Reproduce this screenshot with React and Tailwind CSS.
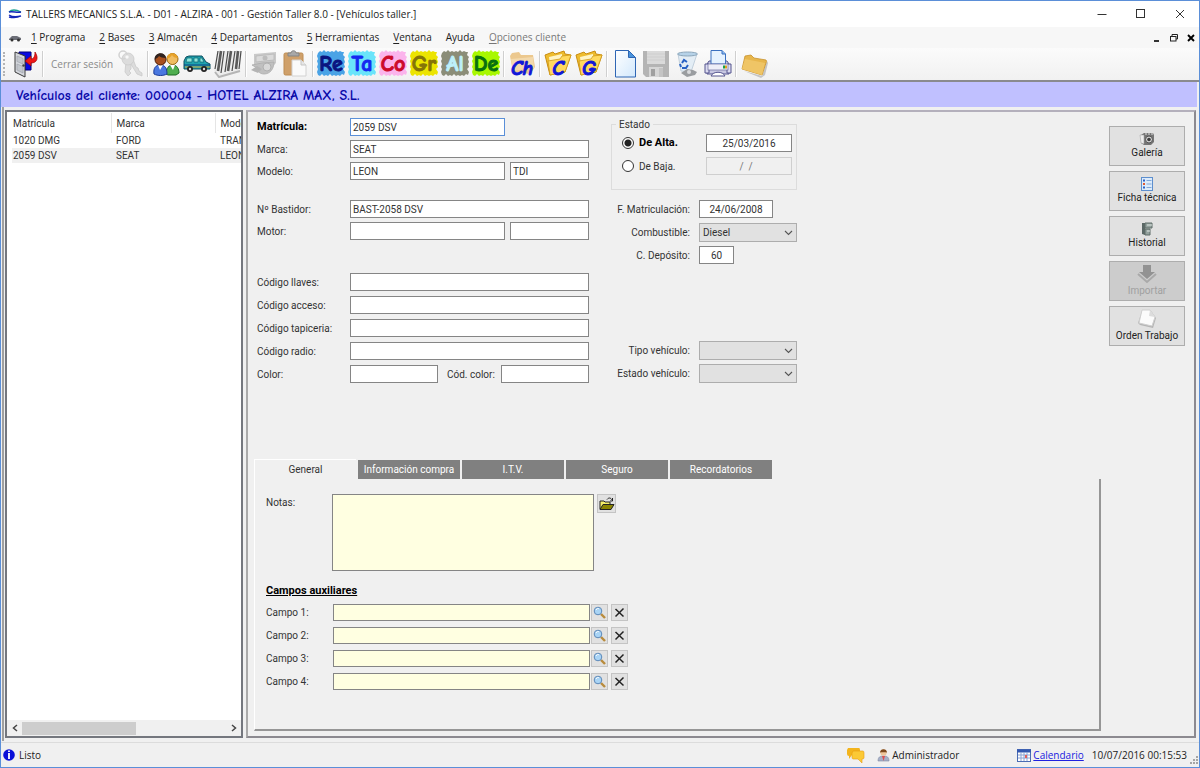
import React from "react";

const ui = "font-['Open_Sans','Noto_Sans',sans-serif]";
const comic = "font-['Comic_Sans_MS','Comic_Neue','DejaVu_Sans',sans-serif]";
const boldText = "text-[11px] font-bold text-black";
const fieldBase = "h-[18px] min-w-0 border bg-white px-[2px] text-[10px] leading-4 text-[#333] outline-none";
const fieldCls = `${fieldBase} border-[#858585]`;

/* ---------- toolbar drawings ---------- */
function Svg({ children, w = 28, h = 28, box }) {
  return (
    <svg width={w} height={h} viewBox={box || `0 0 ${w} ${h}`} aria-hidden="true" className="block shrink-0">
      {children}
    </svg>
  );
}

const DoorIcon = () => (
  <Svg>
    <path d="M8 2 H20 V20 H14 V6 L8 4Z" fill="#0a0ae0" stroke="#00007a" />
    <path d="M4 2 L14 6 V27 L4 22Z" fill="#d4d7dc" stroke="#3a3a3a" />
    <path d="M6 6 L12 8.500 V14 L6 11.500Z M6 14 L12 16.500 V23 L6 20Z" fill="#c2c6cc" stroke="#a0a5ad" strokeWidth=".7" />
    <circle cx="12.500" cy="15.500" r="1.200" fill="#444" />
    <path d="M24 2 C28 8 26 13 20 13 V16 L14 11 L20 6 V9 C23 9 24 6 24 2Z" fill="#f01818" stroke="#a00000" strokeWidth=".7" />
  </Svg>
);
const KeysIcon = () => (
  <Svg>
    <g fill="#dcdcdc" stroke="#cacaca" strokeWidth=".8">
      <path d="M10 11 L9 22 L12 26 L15 23 L13 21 L15 19 L15 11Z" />
      <path d="M13 11 L21 24 L26 26 L26 23 L23 21 L22 18 L20 17 L17 9Z" />
      <circle cx="12" cy="9" r="6" />
    </g>
    <circle cx="7" cy="5" r="4" fill="none" stroke="#d2d2d2" strokeWidth="1.500" />
    <circle cx="11" cy="7" r="1.700" fill="#f8f8f8" />
  </Svg>
);
const PeopleIcon = () => (
  <Svg>
    <path d="M14 24 C14 18 17 15 21 15 C25 15 27 19 27 23 L24 25 H16Z" fill="#4fae4f" stroke="#1d6b24" />
    <path d="M18 15 L21 20 L23 15Z" fill="#fff" />
    <circle cx="20.500" cy="9" r="5.500" fill="#f0bd62" stroke="#9c6a14" />
    <path d="M15 9 C14 2 25 1 26 8 C23 8 21 7 20 5 C19 7 17 8 15 9Z" fill="#e7a229" />
    <path d="M2 24 C1 18 4 15 8 15 C13 15 15 18 15 24 C11 26 6 26 2 24Z" fill="#4a78e0" stroke="#1c3c98" />
    <path d="M6 15 L8 20 L11 15Z" fill="#fff" />
    <circle cx="8.500" cy="9.500" r="5.500" fill="#a8501e" stroke="#4a1c06" />
    <path d="M3 10 C1 3 13 0 14 8 C11 8 8 7 7 6 C6 8 4 8 3 10Z" fill="#30231f" />
  </Svg>
);
const CarIcon = () => (
  <Svg>
    <path d="M1 11 L3 7 L6 6 H19 L23 12 L27 14 V19 H1Z" fill="#1fa3ae" stroke="#0b4f60" />
    <path d="M4 8 H9 V12 H3Z M11 8 H15 V12 H11Z M17 8 H19 L21 12 H17Z" fill="#8fe8dc" stroke="#0b5e6e" strokeWidth=".7" />
    <path d="M1 15 H27" stroke="#0c3f80" />
    <path d="M2 17 H27" stroke="#d8a93a" />
    <circle cx="7" cy="19" r="3" fill="#222" /><circle cx="7" cy="19" r="1.200" fill="#ddd" />
    <circle cx="21" cy="19" r="3" fill="#222" /><circle cx="21" cy="19" r="1.200" fill="#ddd" />
  </Svg>
);
const BarcodeIcon = () => (
  <Svg>
    <path d="M3 1 H28 L26 21 L5 27 L0 21Z" fill="#ececec" />
    <path d="M4 1 L1 19 M10 1 L7 23 M14 1 L11 22 M21 1 L18 21 M27 1 L25 19" stroke="#4c4c4c" strokeWidth="1.200" />
    <path d="M7 1 L4 21 M17 1 L14 21 M24 1 L22 19" stroke="#5a5a5a" strokeWidth="2.600" />
    <path d="M1 22 L5 27 L26 21" fill="none" stroke="#b5b5b5" strokeWidth="2" />
  </Svg>
);
const TruckIcon = () => (
  <Svg>
    <path d="M4 4 L26 2 V13 L24 15 H4Z" fill="#c9c9c9" />
    <path d="M6 6 L24 4 V10 L6 12Z" fill="#dadada" stroke="#b8b8b8" strokeWidth=".8" />
    <circle cx="15" cy="8" r="2.500" fill="#bcbcbc" />
    <path d="M2 15 L12 13 L24 12 C24 19 20 24 14 24 C9 24 7 20 7 18Z" fill="#c0c0c0" stroke="#acacac" strokeWidth=".8" />
    <circle cx="17" cy="17" r="4" fill="#d8d8d8" stroke="#b0b0b0" />
    <path d="M1 20 L7 16 L12 19 L8 23Z" fill="#b4b4b4" />
  </Svg>
);
const ClipboardIcon = () => (
  <Svg>
    <rect x="3" y="3" width="19" height="22" rx="1.500" fill="#cfa06a" stroke="#bd8c52" />
    <path d="M7 6 V3 H10 C10 0 15 0 15 3 H18 V6Z" fill="#a8a8a8" stroke="#858585" />
    <path d="M11 10 H20 L25 15 V26 H11Z" fill="#fafafa" stroke="#d2d2d2" />
    <path d="M20 10 V15 H25" fill="#e6e6e6" stroke="#c6c6c6" />
  </Svg>
);
const FolderIcon = () => (
  <Svg>
    <path d="M1 5 L9 2 L11 4 L20 1 L21 4 L27 5 L21 22 L6 25Z" fill="#eebc2e" stroke="#c98d12" />
    <path d="M5 7 L18 4 L19 22 L7 24Z" fill="#fff4c4" />
    <path d="M4 11 L16 9 L18 6 L27 5 L21 22 L6 25Z" fill="#ffd95e" stroke="#d09a1c" strokeWidth=".8" />
  </Svg>
);
const PaleFolderIcon = () => (
  <Svg>
    <path d="M2 6 L4 3 L11 2 L13 5 L25 5 L27 17 L22 24 L5 22Z" fill="#ecc88e" />
    <path d="M3 9 L25 7 L26 18 L5 21Z" fill="#f3d9ac" />
  </Svg>
);
const NewIcon = () => (
  <Svg>
    <defs><linearGradient id="pg" x1="0" y1="0" x2="1" y2="1"><stop offset="0" stopColor="#fff" /><stop offset="1" stopColor="#d2e8fc" /></linearGradient></defs>
    <path d="M4.500 .5 H17.500 L24.500 7.500 V27 H4.500Z" fill="url(#pg)" stroke="#2f66b4" />
    <path d="M17.500 .5 V7.500 H24.500Z" fill="#4a94dc" stroke="#2f66b4" />
  </Svg>
);
const SaveIcon = () => (
  <Svg>
    <path d="M1 1 H27 V27 H4 L1 24Z" fill="#b4b4b4" />
    <rect x="5" y="1" width="18" height="13" fill="#dadada" />
    <path d="M5 4 H23 M5 7 H23 M5 10 H23" stroke="#cecece" />
    <rect x="7" y="17" width="14" height="10" fill="#d6d6d6" />
    <rect x="9" y="19" width="4" height="7" fill="#a0a0a0" />
    <rect x="17" y="18" width="4" height="9" fill="#c4c4c4" />
  </Svg>
);
const BinIcon = () => (
  <Svg>
    <path d="M5 4 L8 21 L18 22 L24 4Z" fill="#e3edf5" stroke="#c2d0dc" />
    <ellipse cx="14.500" cy="4" rx="10" ry="2" fill="#b6d2e8" stroke="#8da7bb" />
    <path d="M9 13 L11 10 L14 12 M15 15 L13 18 L9 18 M8 17 L7 14" fill="none" stroke="#2862c4" strokeWidth="2" />
    <path d="M8 23 L14 19 L20 20 L24 22 L22 25 L14 27Z" fill="#9a9da0" />
    <circle cx="16" cy="22" r="2" fill="#d8dadc" />
  </Svg>
);
const PrinterIcon = () => (
  <Svg>
    <path d="M5 11 L3 14 V24 H25 V14 L23 11Z" fill="#c8c8e2" stroke="#54548e" />
    <path d="M1 14 H5 V23 H1Z M23 14 H27 V23 H23Z" fill="#dcdcf0" stroke="#54548e" />
    <path d="M7 .5 H18 L21.500 4 V14 H7Z" fill="#e5f2ff" stroke="#3a70c0" />
    <path d="M18 .5 V4 H21.500" fill="#8abaf0" stroke="#3a70c0" />
    <rect x="4" y="14" width="20" height="6" fill="#eeeef8" stroke="#6a6a9e" strokeWidth=".7" />
    <path d="M19 17 h2" stroke="#18a048" strokeWidth="3" /><path d="M21 17 h2" stroke="#e0a020" strokeWidth="3" />
    <path d="M7 26 C9 21 19 21 21 26Z" fill="#fff" stroke="#54548e" />
  </Svg>
);
const TanFolderIcon = () => (
  <Svg>
    <path d="M4 21 L22 26 L27 11 L28 13 L25 25 L21 28Z" fill="#c4c4c4" />
    <path d="M5 6 L11 5 L14 8 L26 10 Q27 11 26 13 L22 25 L2 19Z" fill="#e7b64c" stroke="#c8922c" strokeWidth=".8" />
    <path d="M5 9 L25 13 L22 25 L2 19Z" fill="#efc566" />
  </Svg>
);

const splotch =
  "M1 3 L3 1 L5 2 L7 0 L9 2 L11 1 L13 2 L15 1 L17 2 L19 0 L21 2 L23 1 L25 2 L27 2 L26 5 L28 7 L27 9 L28 12 L27 14 L28 17 L26 19 L28 22 L27 25 L25 24 L23 26 L21 25 L19 26 L17 25 L15 26 L13 24 L11 26 L9 25 L7 26 L5 24 L3 26 L1 25 L0 22 L1 19 L0 17 L1 14 L0 11 L1 9 L0 6Z";

function ToolButton({ label, icon, disabled }) {
  return (
    <button type="button" aria-label={label} title={label} disabled={disabled} className="flex h-7 w-7 shrink-0 items-center justify-center">
      {icon}
    </button>
  );
}
function LetterButton({ text, bg, color }) {
  return (
    <button type="button" className="relative h-7 w-7 shrink-0">
      <Svg><path d={splotch} className={bg} /></Svg>
      <span className={`${comic} ${color} absolute inset-0 flex items-center justify-center text-[22px] font-bold leading-none [-webkit-text-stroke:1px]`}>{text}</span>
    </button>
  );
}
function FolderLetter({ text, icon }) {
  return (
    <button type="button" className="relative h-7 w-7 shrink-0">
      {icon}
      <span className={`${comic} absolute inset-x-0 bottom-0 flex justify-center text-[20px] font-bold italic leading-[18px] text-[#1016d8] [-webkit-text-stroke:1px]`}>{text}</span>
    </button>
  );
}
const Sep = () => <span className="h-[26px] w-[2px] shrink-0 border-l border-[#cfcfcf] bg-white" />;

/* ---------- small drawings ---------- */
const CameraIcon = () => (
  <Svg w={16} h={14}>
    <path d="M2 3 L5 1 H14 L15 3 V10 L12 13 H5 L2 11Z" fill="#757575" />
    <path d="M1 3 L5 3 V12 L2 11Z" fill="#ececec" stroke="#999" strokeWidth=".5" />
    <path d="M6 2 H14" stroke="#e0e0e0" strokeDasharray="2 1" />
    <circle cx="10" cy="7.500" r="3.500" fill="#cfcfcf" stroke="#555" /><circle cx="10" cy="7.500" r="1.800" fill="#3c3c3c" />
  </Svg>
);
const SheetIcon = () => (
  <Svg w={14} h={14}>
    <rect x="1.500" y=".5" width="11" height="13" fill="#dcebfb" stroke="#5d8fce" />
    <path d="M3 3.500h2M3 10.500h2" stroke="#2b62c8" strokeWidth="2" /><path d="M3 7h2" stroke="#e05a30" strokeWidth="2" />
    <path d="M6.500 3.500h5M6.500 7h5M6.500 10.500h5" stroke="#82a8d8" />
  </Svg>
);
const CabinetIcon = () => (
  <Svg w={14} h={14}>
    <path d="M2 1 H5 V13 L2 12Z" fill="#5b6866" />
    <path d="M5 1 H12 V6 H5Z M5 7 H10 V13 H5Z" fill="#93a19d" stroke="#5e6d69" />
    <path d="M7 3 H12 M7 9 H10" stroke="#dfe6e3" />
  </Svg>
);
const ImportIcon = () => (
  <Svg w={20} h={20}>
    <path d="M6 1 H14 V8 H18 L10 15 L2 8 H6Z" fill="#929292" />
    <path d="M1 10 L10 18 L19 10" fill="none" stroke="#a9a9a9" strokeWidth="2" />
  </Svg>
);
const OrderIcon = () => (
  <Svg w={20} h={20}>
    <path d="M5 2 L14 2 L19 9 L16 19 L3 16 L1 14Z" fill="#b5b5b5" />
    <path d="M5 1 L13 1 L18 8 L15 17 L2 14Z" fill="#fbfbfb" stroke="#cfcfcf" />
    <path d="M13 1 L12 7 L18 8Z" fill="#dcdcdc" />
  </Svg>
);
const SearchIcon = () => (
  <Svg w={13} h={13}>
    <path d="M8 8 L12 12" stroke="#b98b3c" strokeWidth="2.400" />
    <circle cx="5" cy="5" r="3.800" fill="#a9d4f5" stroke="#5c88b8" />
    <path d="M3 4 C4 2 5 2 6 3" stroke="#fff" fill="none" />
  </Svg>
);
const CrossIcon = () => (
  <Svg w={11} h={11}><path d="M1.500 2 L9.500 9.500 M9.500 1.500 L1.500 9.500" stroke="#222" strokeWidth="1.500" /></Svg>
);
const OpenIcon = () => (
  <Svg w={16} h={14}>
    <path d="M1 12 V4 H5 L6 5 H11 V7" fill="#f4ef6a" stroke="#222" />
    <path d="M1 12.500 L4 7.500 H15 L12 12.500Z" fill="#8a8400" stroke="#222" />
    <path d="M8 2.500 C10 0 12 1 13 3 M13.500 1 V4 H11" fill="none" stroke="#222" />
  </Svg>
);
const Chevron = () => (
  <svg width="9" height="6" viewBox="0 0 9 6" aria-hidden="true" className="pointer-events-none absolute right-1 top-[7px]">
    <path d="M1 1 L4.500 4.500 L8 1" fill="none" stroke="#555" strokeWidth="1.100" />
  </svg>
);

/* ---------- form pieces ---------- */
function Row({ id, label, bold, children }) {
  return (
    <div className="flex h-[18px] items-center">
      <label htmlFor={id} className={`w-[93px] shrink-0 ${bold ? boldText : ""}`}>{label}</label>
      {children}
    </div>
  );
}
function SideRow({ id, label, children }) {
  return (
    <div className="flex h-[18px] items-center">
      <label htmlFor={id} className="w-[79px] shrink-0 whitespace-nowrap text-right">{label}</label>
      <div className="ml-[9px] flex">{children}</div>
    </div>
  );
}
function Select({ id, options }) {
  return (
    <div className="relative w-[98px]">
      <select id={id} className="block h-[19px] w-full appearance-none border border-[#adadad] bg-[#e1e1e1] px-[3px] text-[10px] text-[#333] outline-none">
        {options.map((o) => <option key={o}>{o}</option>)}
      </select>
      <Chevron />
    </div>
  );
}
function ActionButton({ label, icon, disabled, tall }) {
  return (
    <button
      type="button"
      disabled={disabled}
      className={`${tall ? "pb-[2px]" : "pb-[5px]"} flex h-10 w-full flex-col items-center justify-end border border-[#adadad] bg-[#e1e1e1] text-[10px] leading-[14px] text-[#222] disabled:bg-[#cccccc] disabled:text-[#a0a0a0]`}
    >
      {icon}
      <span className="whitespace-nowrap">{label}</span>
    </button>
  );
}

const menu = [
  ["1", " Programa"], ["2", " Bases"], ["3", " Almacén"], ["4", " Departamentos"],
  ["5", " Herramientas"], ["V", "entana"], ["", "Ayuda"], ["O", "pciones cliente"],
];
const tabs = ["General", "Información compra", "I.T.V.", "Seguro", "Recordatorios"];
const vehicles = [["1020 DMG", "FORD", "TRANSIT"], ["2059 DSV", "SEAT", "LEON"]];

export default function App() {
  return (
    <div className="flex min-h-screen flex-col border border-[#5b8fd8] bg-[#f0f0f0] font-[Roboto,'Liberation_Sans',sans-serif] text-[10px] text-[#333]">
      {/* title bar */}
      <header className={`${ui} flex h-[26px] items-center bg-white pl-[7px] text-[10px] text-[#222]`}>
        <Svg w={14} h={10}>
          <path d="M1 3 C4 0 9 1 13 3" fill="none" stroke="#18a090" strokeWidth="1.300" />
          <path d="M1 3 C5 2 9 4 13 3 M1 8 C5 9 9 9 13 7 M1 6 C4 8 9 8 13 7" fill="none" stroke="#1428b8" strokeWidth="1.300" />
        </Svg>
        <h1 className="ml-1 whitespace-nowrap">TALLERS MECANICS S.L.A. - D01 - ALZIRA - 001 - Gestión Taller 8.0 - [Vehículos taller.]</h1>
        <div className="ml-auto flex">
          <button type="button" aria-label="Minimizar" className="flex h-6 w-[39px] items-center justify-center"><Svg w={10} h={10}><path d="M.5 5.500H9.500" stroke="#333" /></Svg></button>
          <button type="button" aria-label="Maximizar" className="flex h-6 w-[39px] items-center justify-center"><Svg w={10} h={10}><rect x=".5" y=".5" width="8" height="8" fill="none" stroke="#333" /></Svg></button>
          <button type="button" aria-label="Cerrar" className="flex h-6 w-[39px] items-center justify-center"><Svg w={10} h={10}><path d="M1 1 L9 9 M9 1 L1 9" stroke="#333" /></Svg></button>
        </div>
      </header>

      {/* menu */}
      <nav className={`${ui} flex h-[21px] items-center bg-[#f7f7f7] pl-[7px] text-[10px] text-[#222]`}>
        <Svg w={14} h={8}>
          <path d="M1 5 L4 2 H9 L13 4 V6 H1Z" fill="#6d6f78" /><circle cx="4" cy="6" r="1.500" fill="#333" /><circle cx="10.500" cy="6" r="1.500" fill="#333" />
        </Svg>
        <div className="ml-[9px] flex gap-[14px]">
          {menu.map(([k, rest], i) => (
            <button key={rest} type="button" className={`whitespace-pre ${i === 7 ? "text-[#777]" : ""}`}>
              {k && <u className="underline-offset-2">{k}</u>}{rest}
            </button>
          ))}
        </div>
        <div className="ml-auto flex gap-[7px] pr-[3px]">
          <button type="button" aria-label="Minimizar ventana"><Svg w={10} h={10}><path d="M2 8H7" stroke="#000" strokeWidth="1.600" /></Svg></button>
          <button type="button" aria-label="Restaurar ventana"><Svg w={10} h={10}><path d="M3 3V1.500H8.500V6H7" fill="none" stroke="#222" /><rect x="1.500" y="3.500" width="5.500" height="4.500" fill="none" stroke="#222" /></Svg></button>
          <button type="button" aria-label="Cerrar ventana"><Svg w={10} h={10}><path d="M2 2 L8 8 M8 2 L2 8" stroke="#000" strokeWidth="1.900" /></Svg></button>
        </div>
      </nav>

      {/* toolbar */}
      <div className="flex h-[34px] items-center gap-[3px] border-b-2 border-[#8a8a8e] bg-gradient-to-b from-[#fbfbfb] to-[#f1f1f1] pl-[2px]">
        <span className="h-6 w-[5px] shrink-0 border-l-2 border-dotted border-[#b4b4b4]" />
        <ToolButton label="Salir" icon={<DoorIcon />} />
        <Sep />
        <button type="button" className={`${ui} flex h-7 w-[97px] shrink-0 items-center justify-between pl-1 text-[10px] text-[#8a8a8a]`}>
          <span className="whitespace-nowrap">Cerrar sesión</span>
          <KeysIcon />
        </button>
        <Sep />
        <ToolButton label="Clientes" icon={<PeopleIcon />} />
        <ToolButton label="Vehículos" icon={<CarIcon />} />
        <ToolButton label="Artículos" icon={<BarcodeIcon />} />
        <Sep />
        <ToolButton label="Caja" icon={<TruckIcon />} disabled />
        <ToolButton label="Pegar" icon={<ClipboardIcon />} />
        <Sep />
        <LetterButton text="Re" bg="fill-[#4aa3e6]" color="text-[#0a1480]" />
        <LetterButton text="Ta" bg="fill-[#6ae4fa]" color="text-[#1428f0]" />
        <LetterButton text="Co" bg="fill-[#fbb4ec]" color="text-[#cc0a2a]" />
        <LetterButton text="Gr" bg="fill-[#ece400]" color="text-[#857408]" />
        <LetterButton text="Al" bg="fill-[#8b8d78]" color="text-[#bdf0fa]" />
        <LetterButton text="De" bg="fill-[#a8f800]" color="text-[#087010]" />
        <Sep />
        <FolderLetter text="Ch" icon={<PaleFolderIcon />} />
        <Sep />
        <FolderLetter text="C" icon={<FolderIcon />} />
        <FolderLetter text="G" icon={<FolderIcon />} />
        <Sep />
        <ToolButton label="Nuevo" icon={<NewIcon />} />
        <ToolButton label="Guardar" icon={<SaveIcon />} disabled />
        <ToolButton label="Eliminar" icon={<BinIcon />} />
        <ToolButton label="Imprimir" icon={<PrinterIcon />} />
        <Sep />
        <ToolButton label="Carpeta" icon={<TanFolderIcon />} />
      </div>

      <h2 className={`${comic} mr-[2px] flex h-[25px] items-center bg-[#c0c0ff] pl-[15px] pt-[3px] text-[14px] font-bold leading-5 text-[#0808a8]`}>
        Vehículos del cliente: 000004 - HOTEL ALZIRA MAX, S.L.
      </h2>

      {/* work area */}
      <main className="mx-px flex flex-1 gap-[3px] border-l-2 border-[#a0a0a0] py-[3px] pl-px pr-[2px]">
        <section aria-label="Vehículos" className="flex w-[238px] shrink-0 flex-col overflow-hidden border-2 border-[#74777e] bg-white">
          <div className="flex-1 overflow-hidden pl-[5px] pt-px">
            <table className="w-[307px] table-fixed border-collapse text-left">
              <colgroup><col className="w-[99px]" /><col className="w-[104px]" /><col /></colgroup>
              <thead>
                <tr className="h-[20px]">
                  {["Matrícula", "Marca", "Modelo"].map((h) => (
                    <th key={h} scope="col" className="border-r border-[#e5e5e5] p-0 pl-px font-normal [&:not(:first-child)]:pl-[5px]">{h}</th>
                  ))}
                </tr>
              </thead>
              <tbody>
                {vehicles.map((v, i) => (
                  <tr key={v[0]} className={`h-[15px] leading-[15px] ${i === 1 ? "bg-[#f0f0f0]" : ""}`}>
                    {v.map((c) => <td key={c} className="p-0 pl-px [&:not(:first-child)]:pl-[5px]">{c}</td>)}
                  </tr>
                ))}
              </tbody>
            </table>
          </div>
          <div className="flex h-4 items-center bg-[#f0f0f0]">
            <button type="button" aria-label="Izquierda" className="flex w-[15px] justify-center"><Svg w={6} h={8}><path d="M5 1 L1.500 4 L5 7" fill="none" stroke="#444" strokeWidth="1.500" /></Svg></button>
            <div className="flex h-[13px] flex-1"><div className="w-[56%] bg-[#cdcdcd]" /></div>
            <button type="button" aria-label="Derecha" className="flex w-[15px] justify-center"><Svg w={6} h={8}><path d="M1 1 L4.500 4 L1 7" fill="none" stroke="#444" strokeWidth="1.500" /></Svg></button>
          </div>
        </section>

        <section aria-label="Ficha del vehículo" className="flex min-w-0 flex-1 flex-col border-2 border-b-[#8c8a90] border-l-[#aaa] border-r-[#8c8a90] border-t-[#b4b0bc] pb-[5px]">
          <div className="flex pl-[9px] pr-[9px] pt-[6px]">
            <div className="flex w-[332px] shrink-0 flex-col">
              <div className="flex flex-col gap-1">
                <Row id="matricula" label="Matrícula:" bold>
                  <input id="matricula" defaultValue="2059 DSV" className={`${fieldBase} w-[155px] border-[#5a8fd8]`} />
                </Row>
                <Row id="marca" label="Marca:"><input id="marca" defaultValue="SEAT" className={`${fieldCls} flex-1`} /></Row>
                <Row id="modelo" label="Modelo:">
                  <input id="modelo" defaultValue="LEON" className={`${fieldCls} w-[155px]`} />
                  <input aria-label="Versión" defaultValue="TDI" className={`${fieldCls} ml-[5px] flex-1`} />
                </Row>
              </div>
              <div className="mt-5 flex flex-col gap-1">
                <Row id="bastidor" label="Nº Bastidor:"><input id="bastidor" defaultValue="BAST-2058 DSV" className={`${fieldCls} flex-1`} /></Row>
                <Row id="motor" label="Motor:">
                  <input id="motor" className={`${fieldCls} w-[155px]`} />
                  <input aria-label="Código motor" className={`${fieldCls} ml-[5px] flex-1`} />
                </Row>
              </div>
              <div className="mt-[33px] flex flex-col gap-[5px]">
                {["llaves", "acceso", "tapiceria", "radio"].map((n) => (
                  <Row key={n} id={`cod-${n}`} label={`Código ${n}:`}><input id={`cod-${n}`} className={`${fieldCls} flex-1`} /></Row>
                ))}
                <Row id="color" label="Color:">
                  <input id="color" className={`${fieldCls} w-[88px]`} />
                  <label htmlFor="cod-color" className="w-[63px] whitespace-nowrap pl-[9px]">Cód. color:</label>
                  <input id="cod-color" className={`${fieldCls} flex-1`} />
                </Row>
              </div>
            </div>

            <div className="ml-[22px] w-[186px] shrink-0">
              <fieldset className="h-[72px] border border-[#dcdcdc] px-[10px]">
                <legend className="-ml-[6px] px-[3px] leading-[13px]">Estado</legend>
                <div className="mt-[3px] flex h-[18px] items-center">
                  <input id="alta" type="radio" name="estado" defaultChecked className="mr-[5px] h-3 w-3 appearance-none rounded-full border border-[#333] bg-white checked:bg-[radial-gradient(circle,#222_0_3px,#fff_4px)]" />
                  <label htmlFor="alta" className={`${boldText} flex-1`}>De Alta.</label>
                  <input aria-label="Fecha de alta" defaultValue="25/03/2016" className={`${fieldCls} -mr-[6px] w-[86px] text-center`} />
                </div>
                <div className="mt-[5px] flex h-[18px] items-center">
                  <input id="baja" type="radio" name="estado" className="mr-[5px] h-3 w-3 appearance-none rounded-full border border-[#333] bg-white checked:bg-[radial-gradient(circle,#222_0_3px,#fff_4px)]" />
                  <label htmlFor="baja" className="flex-1">De Baja.</label>
                  <input aria-label="Fecha de baja" disabled defaultValue="/  /" className="-mr-[6px] h-[18px] w-[86px] border border-[#cfcfcf] bg-[#f0f0f0] px-[2px] pr-2 text-center text-[10px] text-[#777]" />
                </div>
              </fieldset>
              <div className="mt-[10px] flex flex-col gap-[5px]">
                <SideRow id="fmat" label="F. Matriculación:"><input id="fmat" defaultValue="24/06/2008" className={`${fieldCls} w-[74px] text-center`} /></SideRow>
                <SideRow id="comb" label="Combustible:"><Select id="comb" options={["Diesel", "Gasolina"]} /></SideRow>
                <SideRow id="dep" label="C. Depósito:"><input id="dep" defaultValue="60" className={`${fieldCls} w-[35px] text-center`} /></SideRow>
              </div>
              <div className="mt-[77px] flex flex-col gap-[5px]">
                <SideRow id="tipo" label="Tipo vehículo:"><Select id="tipo" options={[""]} /></SideRow>
                <SideRow id="estv" label="Estado vehículo:"><Select id="estv" options={[""]} /></SideRow>
              </div>
            </div>

            <div className="ml-auto mt-2 flex w-[76px] shrink-0 flex-col gap-[5px]">
              <ActionButton label="Galería" icon={<CameraIcon />} />
              <ActionButton label="Ficha técnica" icon={<SheetIcon />} />
              <ActionButton label="Historial" icon={<CabinetIcon />} />
              <ActionButton label="Importar" icon={<ImportIcon />} disabled tall />
              <ActionButton label="Orden Trabajo" icon={<OrderIcon />} tall />
            </div>
          </div>

          {/* tabs */}
          <div className="ml-[6px] mr-[93px] mt-[76px] flex flex-1 flex-col">
            <div role="tablist" className="flex h-[20px] items-end gap-[2px]">
              {tabs.map((t, i) => (
                <button
                  key={t}
                  type="button"
                  role="tab"
                  aria-selected={i === 0}
                  className={i === 0
                    ? "h-[20px] w-[102px] border-l border-t border-white text-[#333]"
                    : "h-[19px] w-[102px] bg-[#808080] text-white"}
                >
                  {t}
                </button>
              ))}
            </div>
            <div role="tabpanel" className="flex-1 border-b-2 border-l border-r-2 border-b-[#969696] border-l-white border-r-[#969696] px-[11px] pt-[15px]">
              <div className="flex items-start">
                <label htmlFor="notas" className="w-[66px] shrink-0 pt-px">Notas:</label>
                <textarea id="notas" className="h-[77px] w-[262px] resize-none border border-[#858585] bg-[#ffffe1] p-1 outline-none" />
                <button type="button" aria-label="Abrir notas" className="ml-[3px] flex h-[19px] w-[19px] items-center justify-center border border-[#c4c4c4] bg-[#e1e1e1]"><OpenIcon /></button>
              </div>
              <h3 className={`${boldText} mt-3 leading-4 underline`}>Campos auxiliares</h3>
              <div className="mt-1 flex flex-col gap-[5px]">
                {[1, 2, 3, 4].map((n) => (
                  <div key={n} className="flex h-[18px] items-center">
                    <label htmlFor={`campo${n}`} className="w-[67px] shrink-0">Campo {n}:</label>
                    <input id={`campo${n}`} className="h-[17px] w-[257px] border border-[#858585] bg-[#ffffe1] px-[2px] outline-none" />
                    <button type="button" aria-label={`Buscar campo ${n}`} className="ml-px flex h-[17px] w-[17px] items-center justify-center border border-[#c4c4c4] bg-[#e1e1e1]"><SearchIcon /></button>
                    <button type="button" aria-label={`Borrar campo ${n}`} className="ml-[3px] flex h-[17px] w-[17px] items-center justify-center border border-[#c4c4c4] bg-[#e1e1e1]"><CrossIcon /></button>
                  </div>
                ))}
              </div>
            </div>
          </div>
        </section>
      </main>

      {/* status bar */}
      <footer className={`${ui} mt-px flex h-[25px] items-center border-t border-[#dcdcdc] pl-[2px] text-[10px] text-[#222]`}>
        <Svg w={12} h={12}><circle cx="6" cy="6" r="5.800" fill="#0a10d8" /><path d="M6 1.500V3M6 4V10" stroke="#fff" strokeWidth="1.800" /></Svg>
        <span className="ml-1 flex-1">Listo</span>
        <Svg w={19} h={16}>
          <path d="M2 1 H13 Q14 1 14 3 V8 H6 L3 12 V9 Q1 9 1 7 V3Z" fill="#f3b41c" />
          <path d="M7 4 H17 Q18 4 18 6 V11 Q18 12 16 12 V16 L12 12 H7 Q6 12 6 10 V6Z" fill="#fbc935" stroke="#e89a10" strokeWidth=".6" />
        </Svg>
        <span className="ml-3 flex items-center gap-[2px]">
          <Svg w={13} h={14}>
            <path d="M1 13 C1 9 3 8 6.500 8 S12 9 12 13Z" fill="#a6b0c8" stroke="#7d88a4" strokeWidth=".6" />
            <path d="M5 8 L6.500 13 L8 8Z" fill="#e05050" />
            <circle cx="6.500" cy="4.500" r="3.200" fill="#efc79c" /><path d="M3 4.500 C3 0 10 0 10 4.500 C8 4 5 4 3 4.500Z" fill="#7c4a20" />
          </Svg>
          Administrador
        </span>
        <a href="#calendario" className="ml-[58px] flex items-center gap-[2px] text-[#2020e0] underline">
          <Svg w={14} h={13}>
            <rect x=".5" y=".5" width="13" height="12" fill="#fff" stroke="#4a6cb4" /><path d="M0 2H14" stroke="#3458b0" strokeWidth="3" />
            <path d="M1 6H13M1 9H13M4 3V12M7 3V12M10 3V12" stroke="#8aa2d4" /><rect x="8" y="6" width="2" height="3" fill="#e06060" />
          </Svg>
          Calendario
        </a>
        <time className="ml-2 whitespace-nowrap">10/07/2016 00:15:53</time>
        <span className="ml-[2px] self-end pb-[2px]">
          <Svg w={10} h={10}><path d="M7 1h2v2h-2zM4 4h2v2h-2zM7 4h2v2h-2zM1 7h2v2h-2zM4 7h2v2h-2zM7 7h2v2h-2z" fill="#a5a5a5" /></Svg>
        </span>
      </footer>
    </div>
  );
}
